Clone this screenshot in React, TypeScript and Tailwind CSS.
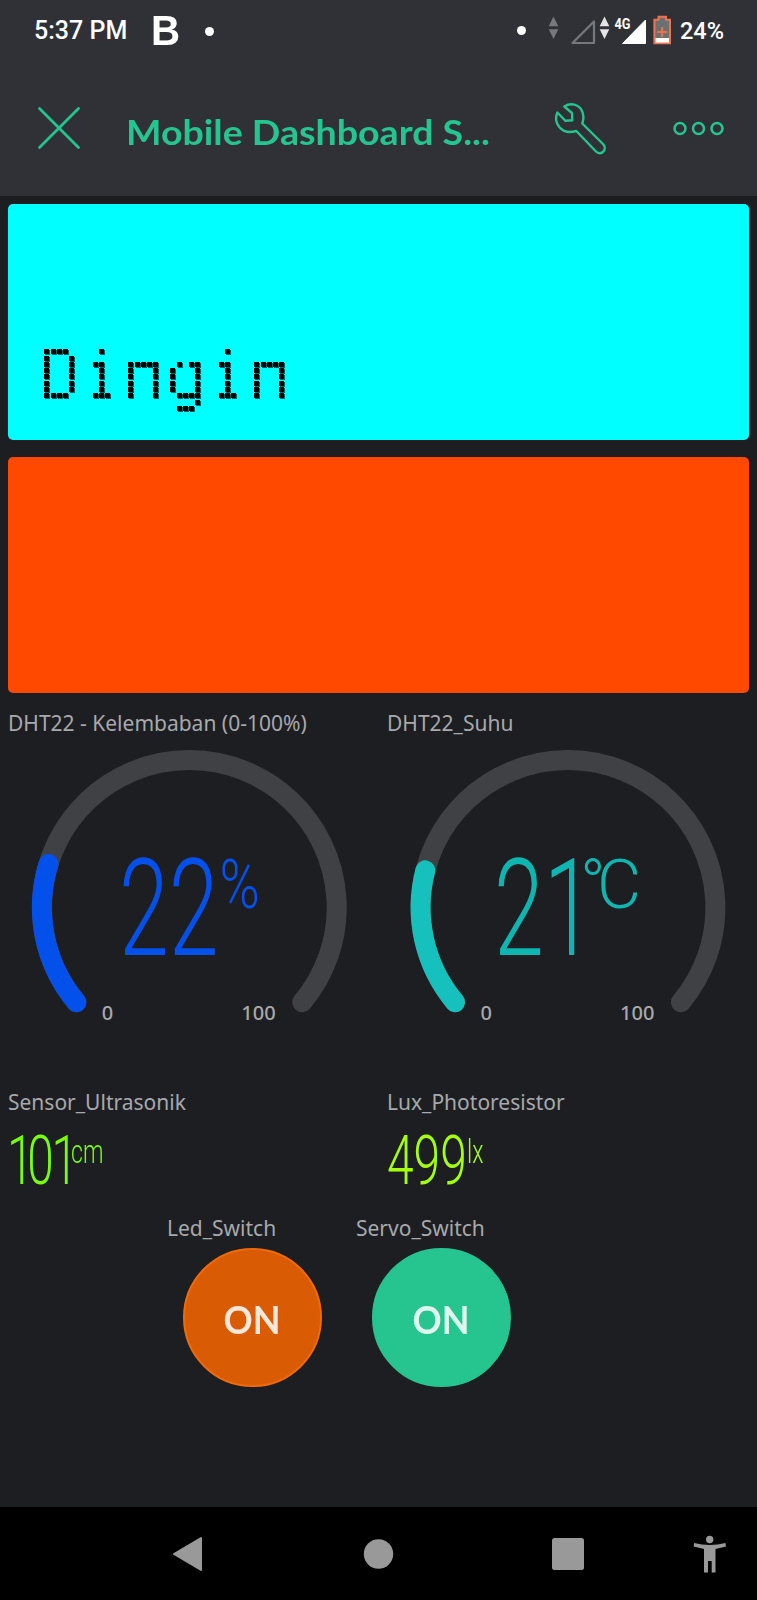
import React from "react";

const LABEL = "font-['Noto_Sans',sans-serif] text-[21px] leading-[30px] text-[#a8a9ab] whitespace-nowrap";

function StatusBar() {
  return (
    <div className="flex h-[62px] items-center pl-[34px] pr-[33px] text-white font-['Roboto',sans-serif]">
      <span className="w-[117px] whitespace-nowrap text-[25px] font-medium leading-[62px]">5:37 PM</span>
      <span className="w-[54px] font-['Liberation_Sans',sans-serif] text-[42px] font-bold leading-[62px]">
        <span className="inline-block origin-left scale-x-[0.96]">B</span>
      </span>
      <span className="size-[9px] rounded-full bg-white" />
      <div className="grow" />
      <svg width="156" height="62" viewBox="516 0 156 62">
        <circle cx="521.5" cy="30.5" r="4.5" fill="#fff" />
        <path d="M553.5 16.5l4.8 9.7h-9.6zM553.5 39l4.8-9.7h-9.6z" fill="#77787c" />
        <path d="M594 21.5V43h-21.5z" fill="none" stroke="#77787c" strokeWidth="2.2" strokeLinejoin="round" />
        <path d="M604.5 16.5l4.8 9.7h-9.6zM604.5 39l4.8-9.7h-9.6z" fill="#e4e4e6" />
        <text x="614.5" y="28.5" fontSize="15.5" fontWeight="700" fill="#fff" textLength="16" lengthAdjust="spacingAndGlyphs">4G</text>
        <path d="M645.5 20v23.5h-23z" fill="#fff" stroke="#fff" strokeWidth="1" strokeLinejoin="round" />
        <path d="M658.5 16.8h7.5v3h4v23.4h-15.6V19.8h4.1z" fill="#6b7073" stroke="#f2734b" strokeWidth="2" />
        <rect x="655.5" y="38" width="13.5" height="4.6" fill="#fff" />
        <path d="M662.2 27v10M657.2 32h10" stroke="#f2734b" strokeWidth="2" />
      </svg>
      <span className="ml-2 whitespace-nowrap text-[23.5px] font-medium leading-[62px]">24%</span>
    </div>
  );
}

function Header() {
  return (
    <div className="flex h-[134px] items-start pl-[37px] text-[#26c48f]">
      <svg className="mt-[44px]" width="44" height="44" viewBox="0 0 44 44" fill="none" stroke="currentColor" strokeWidth="2.8" strokeLinecap="round">
        <path d="M2.5 2.5l39 39M41.5 2.5l-39 39" />
      </svg>
      <h1 className="ml-[45px] mt-[45px] w-[424px] whitespace-nowrap font-['Lato',sans-serif] text-[35px] font-bold leading-[48px]">
        <span className="inline-block origin-left scale-x-[1.073]">Mobile Dashboard S...</span>
      </h1>
      <svg className="mt-[38px]" width="60" height="56" viewBox="550 99.5 60 56" fill="none" stroke="currentColor" strokeWidth="2.4" strokeLinejoin="round" strokeLinecap="round">
        <path d="M564.3 106C571 101.8 578.5 104 581.8 110C584 114.5 583.8 118.5 582.3 123L603 143.5C608 149 601 156 596 151L576.3 130.5C570 132.5 563.5 131.5 559.3 126.5C555.3 121.5 555.3 116.5 557.3 112L565.5 120.3L572.3 119.8L572 112.5z" />
      </svg>
      <svg className="ml-[61px] mt-[56px]" width="56" height="20" viewBox="0 0 56 20" fill="none" stroke="currentColor" strokeWidth="2.5">
        <circle cx="9" cy="10.5" r="5.5" />
        <circle cx="27.5" cy="10.5" r="5.5" />
        <circle cx="46" cy="10.5" r="5.5" />
      </svg>
    </div>
  );
}

const PITCH = 6.3;

/* Samples the text at one point per LCD cell, then grows each hit into a square. */
function LcdFilter({ id, columns }: { id: string; columns: number[] }) {
  const rows = [0, 1, 2, 3, 4, 5, 6, 7, 8, 9];
  return (
    <filter id={id} filterUnits="userSpaceOnUse" primitiveUnits="userSpaceOnUse" x="0" y="0" width="42" height="90" colorInterpolationFilters="sRGB">
      {columns.map((k) => (
        <feFlood key={k} x={Math.floor(2.75 + PITCH * k)} y={0} width={1} height={90} floodColor="#000" result={`c${k}`} />
      ))}
      <feMerge result="cols">
        {columns.map((k) => (
          <feMergeNode key={k} in={`c${k}`} />
        ))}
      </feMerge>
      {rows.map((k) => (
        <feFlood key={k} x={0} y={Math.floor(14.75 + PITCH * k)} width={42} height={1} floodColor="#000" result={`r${k}`} />
      ))}
      <feMerge result="rows">
        {rows.map((k) => (
          <feMergeNode key={k} in={`r${k}`} />
        ))}
      </feMerge>
      <feComposite in="cols" in2="rows" operator="in" result="grid" />
      <feComponentTransfer in="SourceAlpha" result="solid">
        <feFuncA type="linear" slope={40} intercept={-16} />
      </feComponentTransfer>
      <feComposite in="grid" in2="solid" operator="in" result="hits" />
      <feMorphology in="hits" operator="dilate" radius={2} result="cells" />
      <feOffset in="cells" dx={1} dy={1} result="shifted" />
      <feComponentTransfer in="shifted" result="edge">
        <feFuncA type="linear" slope={0.6} />
      </feComponentTransfer>
      <feMerge>
        <feMergeNode in="edge" />
        <feMergeNode in="cells" />
      </feMerge>
    </filter>
  );
}

const GLYPH_FIT: Record<string, string> = {
  D: "-ml-[4.6px]",
  i: "-ml-[6px]",
  n: "-ml-[5.9px]",
  g: "-ml-[4.7px]",
};

function DotMatrix({ text }: { text: string }) {
  return (
    <div className="flex pl-[36px] pt-[133px]">
      <svg width="0" height="0" className="absolute">
        <LcdFilter id="lcd-wide" columns={[0, 1, 2, 3, 4]} />
        <LcdFilter id="lcd-narrow" columns={[1, 2, 3]} />
      </svg>
      {text.split("").map((c, i) => (
        <span
          key={i}
          className={`block h-[90px] w-[42px] font-['DejaVu_Sans_Mono',monospace] text-[70px] leading-[76px] text-black ${c === "i" ? "[filter:url(#lcd-narrow)]" : "[filter:url(#lcd-wide)]"}`}
        >
          <span className={`block w-[42px] origin-left ${GLYPH_FIT[c]}`}>{c}</span>
        </span>
      ))}
    </div>
  );
}

type GaugeProps = {
  label: string;
  value: number;
  color: string;
  textColor: string;
  cx: number;
  numX: number;
  children: React.ReactNode;
};

const R = 147.4;
function point(cx: number, deg: number) {
  const a = ((140 + deg) * Math.PI) / 180;
  return `${cx + R * Math.cos(a)} ${157.5 + R * Math.sin(a)}`;
}
function arc(cx: number, sweep: number) {
  return `M${point(cx, 0)} A${R} ${R} 0 ${sweep > 180 ? 1 : 0} 1 ${point(cx, sweep)}`;
}

function Gauge(g: GaugeProps) {
  return (
    <section className="h-full">
      <div className={`${LABEL} h-[42px] pl-[8px]`}>{g.label}</div>
      <svg width="378" height="290" viewBox="0 0 378 290" fill="none" strokeWidth="20" strokeLinecap="round">
        <path d={arc(g.cx, 260)} stroke="#404144" />
        <path d={arc(g.cx, 2.6 * g.value)} stroke={g.color} />
        <g fill={g.textColor} className="font-['Roboto',sans-serif]" stroke="none" fontWeight="300">
          <text transform={`translate(${g.numX} 204.5) scale(0.661 1)`} fontSize="136">{g.value}</text>
          {g.children}
        </g>
        <g fill="#a8a9ab" stroke="none" className="font-['Noto_Sans',sans-serif]" fontSize="20" fontWeight="500">
          <text x={g.cx - 87.5} y="270">0</text>
          <text x={g.cx + 52} y="270">100</text>
        </g>
      </svg>
    </section>
  );
}

function Switch({ label, fill }: { label: string; fill: string }) {
  return (
    <section className="w-[189px]">
      <div className={`${LABEL} h-[35px]`}>{label}</div>
      <button className={`ml-[16px] flex size-[139px] items-center justify-center rounded-full border-2 pr-[2px] pt-[3px] font-['Lato',sans-serif] text-[38px] font-bold text-white/85 ${fill}`}>
        <span className="scale-x-[0.95]">ON</span>
      </button>
    </section>
  );
}

const DIGITS = "inline-block origin-left text-[69px] leading-[88px]";
const UNIT = "mt-[17px] inline-block origin-left text-[33px] leading-[36px]";

export default function App() {
  return (
    <div className="flex h-[1600px] w-[757px] flex-col overflow-hidden bg-[#1d1e22]">
      <header className="h-[196px] bg-[#303136]">
        <StatusBar />
        <Header />
      </header>
      <main className="flex grow flex-col">
        <div className="flex flex-col gap-[17px] px-[8px] pt-[8px]">
          <div className="h-[236px] rounded-[5px] bg-[#00ffff]">
            <DotMatrix text="Dingin" />
          </div>
          <div className="h-[236px] rounded-[5px] bg-[#ff4800]" />
        </div>
        <div className="mt-[15px] grid h-[379px] grid-cols-[379px_378px]">
          <Gauge label="DHT22 - Kelembaban (0-100%)" value={22} color="#0450ea" textColor="#0450ea" cx={189.3} numX={119}>
            <text transform="translate(219.5 158) scale(0.8 1)" fontSize="68">%</text>
          </Gauge>
          <Gauge label="DHT22_Suhu" value={21} color="#16c1bd" textColor="#0fb5b0" cx={189} numX={115}>
            <text y="158" fontSize="68">
              <tspan x="201">°</tspan>
              <tspan x="218">C</tspan>
            </text>
          </Gauge>
        </div>
        <div className="grid h-[126px] grid-cols-[379px_378px]">
          <section>
            <div className={`${LABEL} pl-[8px]`}>Sensor_Ultrasonik</div>
            <div className="flex pl-[7px] font-['Roboto',sans-serif] font-light text-[#78ff0c]">
              <span className="w-[64px]">
                <span className={`${DIGITS} scale-x-[0.69]`}><span className="-tracking-[9px]">1</span><span className="-tracking-[3px]">01</span></span>
              </span>
              <span className={`${UNIT} scale-x-[0.7]`}>cm</span>
            </div>
          </section>
          <section>
            <div className={`${LABEL} pl-[8px]`}>Lux_Photoresistor</div>
            <div className="flex pl-[8px] font-['Roboto',sans-serif] font-light text-[#a4ff0c]">
              <span className="w-[80px]">
                <span className={`${DIGITS} scale-x-[0.695]`}>499</span>
              </span>
              <span className={`${UNIT} scale-x-[0.7]`}>lx</span>
            </div>
          </section>
        </div>
        <div className="flex pl-[167px]">
          <Switch label="Led_Switch" fill="border-[#f06a0c] bg-[#d95c04]" />
          <Switch label="Servo_Switch" fill="border-[#26c48f] bg-[#26c48f]" />
        </div>
      </main>
      <nav className="h-[93px] bg-black">
        <svg width="757" height="93" viewBox="0 1507 757 93" fill="#999">
          <path d="M174 1554L201 1538V1570z" stroke="#999" strokeWidth="2" strokeLinejoin="round" />
          <circle cx="378.5" cy="1554" r="14.7" />
          <rect x="552" y="1538" width="32" height="32" rx="2.5" />
          <circle cx="709.7" cy="1539.5" r="3.7" />
          <path d="M694 1543Q709.7 1547 725.5 1543L726 1546.5L715.5 1549V1572.5H711.7V1561H708V1572.5H704V1549L693.7 1546.5z" />
        </svg>
      </nav>
    </div>
  );
}
